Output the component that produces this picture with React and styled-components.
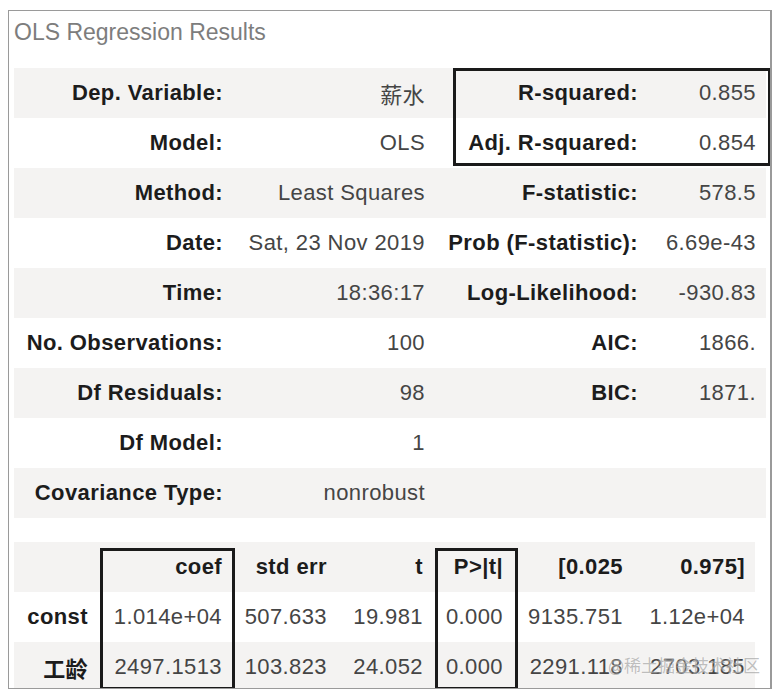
import React from 'react';
import styled, { createGlobalStyle } from 'styled-components';

const GlobalStyle = createGlobalStyle`
  html, body {
    margin: 0;
    padding: 0;
    background: #fff;
  }
`;

const Frame = styled.div`
  position: relative;
  box-sizing: border-box;
  margin: 10px 0 0 8px;
  width: 764px;
  height: 679px;
  border: 1px solid #9a9a9a;
  border-right-width: 2px;
  padding: 0 0 0 5px;
  font-family: "Liberation Sans", Arial, "Noto Sans CJK SC", sans-serif;
  overflow: hidden;
`;

const Caption = styled.div`
  height: 57px;
  line-height: 43px;
  font-size: 23px;
  color: #7d7d7d;
`;

const Table = styled.table`
  border-collapse: collapse;
  border-spacing: 0;
  width: ${p => p.$width}px;
  table-layout: fixed;
  margin-bottom: ${p => p.$gap || 0}px;
`;

const Row = styled.tr`
  height: 50px;
  background: ${p => (p.$shade ? '#f4f3f2' : '#fff')};
`;

const Label = styled.th`
  box-sizing: border-box;
  font-weight: bold;
  font-size: 22px;
  letter-spacing: 0.4px;
  color: #1c1c1c;
  text-align: right;
  padding: 0 10px 0 0;
  white-space: nowrap;
  width: ${p => p.$w}px;
`;

const Value = styled.td`
  box-sizing: border-box;
  font-size: 22px;
  color: #454545;
  text-align: right;
  padding: 0 10px 0 0;
  white-space: nowrap;
  letter-spacing: 0.4px;
  width: ${p => p.$w}px;
`;

const Box = styled.div`
  position: absolute;
  box-sizing: border-box;
  border: 3px solid #1a1a1a;
  left: ${p => p.$x}px;
  top: ${p => p.$y}px;
  width: ${p => p.$w}px;
  height: ${p => p.$h}px;
  pointer-events: none;
`;

const Watermark = styled.div`
  position: absolute;
  right: 10px;
  bottom: 11px;
  font-size: 17px;
  color: rgba(130, 130, 130, 0.5);
  font-family: "Noto Sans CJK SC", "Liberation Sans", sans-serif;
  text-shadow: 0 0 2px rgba(255, 255, 255, 0.8);
`;

const summary = [
  ['Dep. Variable:', '薪水', 'R-squared:', '0.855'],
  ['Model:', 'OLS', 'Adj. R-squared:', '0.854'],
  ['Method:', 'Least Squares', 'F-statistic:', '578.5'],
  ['Date:', 'Sat, 23 Nov 2019', 'Prob (F-statistic):', '6.69e-43'],
  ['Time:', '18:36:17', 'Log-Likelihood:', '-930.83'],
  ['No. Observations:', '100', 'AIC:', '1866.'],
  ['Df Residuals:', '98', 'BIC:', '1871.'],
  ['Df Model:', '1', '', ''],
  ['Covariance Type:', 'nonrobust', '', ''],
];

const coefHead = ['', 'coef', 'std err', 't', 'P>|t|', '[0.025', '0.975]'];
const coefRows = [
  ['const', '1.014e+04', '507.633', '19.981', '0.000', '9135.751', '1.12e+04'],
  ['工龄', '2497.1513', '103.823', '24.052', '0.000', '2291.118', '2703.185'],
];
const coefWidths = [84, 134, 105, 96, 80, 120, 122];

export default function App() {
  return (
    <>
      <GlobalStyle />
      <Frame>
        <Caption>OLS Regression Results</Caption>
        <Table $width={752} $gap={24}>
          <tbody>
            {summary.map((r, i) => (
              <Row key={r[0]} $shade={i % 2 === 0}>
                <Label $w={219}>{r[0]}</Label>
                <Value $w={202}>{r[1]}</Value>
                <Label $w={213}>{r[2]}</Label>
                <Value $w={118}>{r[3]}</Value>
              </Row>
            ))}
          </tbody>
        </Table>
        <Table $width={741}>
          <thead>
            <Row $shade>
              {coefHead.map((h, i) => (
                <Label key={i} $w={coefWidths[i]}>{h}</Label>
              ))}
            </Row>
          </thead>
          <tbody>
            {coefRows.map((r, i) => (
              <Row key={r[0]} $shade={i % 2 === 1}>
                <Label $w={coefWidths[0]}>{r[0]}</Label>
                {r.slice(1).map((v, j) => (
                  <Value key={j} $w={coefWidths[j + 1]}>{v}</Value>
                ))}
              </Row>
            ))}
          </tbody>
        </Table>
        <Box $x={444} $y={57} $w={318} $h={98} />
        <Box $x={91} $y={537} $w={135} $h={142} />
        <Box $x={426} $y={537} $w={83} $h={142} />
        <Watermark>@稀土掘金技术社区</Watermark>
      </Frame>
    </>
  );
}
